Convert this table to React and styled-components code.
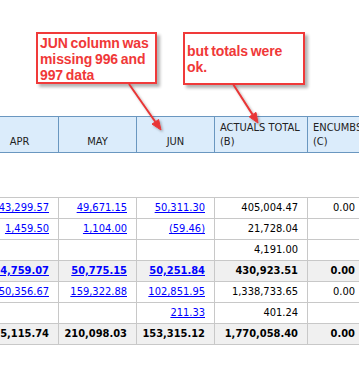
import React from "react";
import styled, { createGlobalStyle } from "styled-components";

const GlobalStyle = createGlobalStyle`
  html, body {
    margin: 0;
    padding: 0;
    background: #ffffff;
    overflow: hidden;
  }
  body {
    font-family: "DejaVu Sans Condensed", "Liberation Sans", sans-serif;
  }
`;

const columns = "78px 78px 78px 93px 57px";

const headers = [
  { label: "APR", align: "center" },
  { label: "MAY", align: "center" },
  { label: "JUN", align: "center" },
  { label: "ACTUALS TOTAL\n(B)", align: "left" },
  { label: "ENCUMBS\n(C)", align: "left" },
];

// l = link, t = total row
const rows = [
  { cells: ["43,299.57", "49,671.15", "50,311.30", "405,004.47", "0.00"], links: [1, 1, 1, 0, 0] },
  { cells: ["1,459.50", "1,104.00", "(59.46)", "21,728.04", ""], links: [1, 1, 1, 0, 0] },
  { cells: ["", "", "", "4,191.00", ""], links: [0, 0, 0, 0, 0] },
  { cells: ["44,759.07", "50,775.15", "50,251.84", "430,923.51", "0.00"], links: [1, 1, 1, 0, 0], total: true },
  { cells: ["50,356.67", "159,322.88", "102,851.95", "1,338,733.65", "0.00"], links: [1, 1, 1, 0, 0] },
  { cells: ["", "", "211.33", "401.24", ""], links: [0, 0, 1, 0, 0] },
  { cells: ["95,115.74", "210,098.03", "153,315.12", "1,770,058.40", "0.00"], links: [0, 0, 0, 0, 0], total: true },
];

export default function App() {
  return (
    <Page>
      <GlobalStyle />
      <Notes>
        <Callout $w={121} $h={52} $pt={1}>
          JUN column was missing 996 and 997 data
        </Callout>
        <Callout $w={122} $h={53} $pt={9}>
          but totals were ok.
        </Callout>
      </Notes>

      <Table>
        <HeaderRow>
          {headers.map((h) => (
            <HeadCell key={h.label} $align={h.align}>
              {h.label}
            </HeadCell>
          ))}
        </HeaderRow>
        <Body>
          {rows.map((r, i) => (
            <Row key={i} $total={r.total}>
              {r.cells.map((c, j) => (
                <Cell key={j}>{r.links[j] && c ? <Link>{c}</Link> : c}</Cell>
              ))}
            </Row>
          ))}
        </Body>
      </Table>

      <Arrows width="359" height="366">
        <defs>
          <filter id="sh" x="-50%" y="-50%" width="200%" height="200%">
            <feDropShadow dx="1.5" dy="1.5" stdDeviation="1" floodColor="#000" floodOpacity="0.3" />
          </filter>
        </defs>
        <g filter="url(#sh)" fill="#e83636" stroke="#e83636">
          <line x1="129" y1="84" x2="155.3" y2="121.8" strokeWidth="2" />
          <polygon points="161,130 152,124.1 158.6,119.5" strokeWidth="1" />
          <line x1="233" y1="84" x2="252.6" y2="114.6" strokeWidth="2" />
          <polygon points="258,123 249.2,116.8 256,112.4" strokeWidth="1" />
        </g>
      </Arrows>
    </Page>
  );
}

const Page = styled.div`
  position: relative;
  width: 359px;
  height: 366px;
  overflow: hidden;
  background: #fff;
`;

const Notes = styled.div`
  display: flex;
  align-items: flex-start;
  gap: 26px;
  height: 116px;
  box-sizing: border-box;
  padding: 32px 0 0 36px;
`;

const Callout = styled.div`
  box-sizing: border-box;
  width: ${(p) => p.$w}px;
  height: ${(p) => p.$h}px;
  border: 2px solid #f03a3a;
  background: #fff;
  box-shadow: 3px 3px 3px rgba(0, 0, 0, 0.3);
  padding: ${(p) => p.$pt}px 4px 0 2px;
  color: #f03838;
  font-family: "Liberation Sans", Arial, sans-serif;
  font-weight: 700;
  font-size: 14px;
  line-height: 16px;
  letter-spacing: -0.1px;
  word-spacing: -1px;
`;

const Table = styled.div`
  margin-left: -19px;
  font-size: 11px;
  color: #000;
`;

const HeaderRow = styled.div`
  display: grid;
  grid-template-columns: ${columns};
  background: #dbecfb;
  border-top: 1px solid #6a97c0;
  border-bottom: 1px solid #6a97c0;
`;

const HeadCell = styled.div`
  height: 35px;
  box-sizing: border-box;
  border-right: 1px solid #6a97c0;
  display: flex;
  align-items: flex-end;
  justify-content: ${(p) => (p.$align === "center" ? "center" : "flex-start")};
  text-align: ${(p) => p.$align};
  padding: 0 5px 3px;
  white-space: pre-line;
  line-height: 14px;
  color: #222;
`;

const Body = styled.div`
  margin-top: 44px;
  border-top: 1px solid #c8c8c8;
`;

const Row = styled.div`
  display: grid;
  grid-template-columns: ${columns};
  border-bottom: 1px solid #c8c8c8;
  background: ${(p) => (p.$total ? "#f0f0f0" : "#fff")};
  font-weight: ${(p) => (p.$total ? 700 : 400)};
`;

const Cell = styled.div`
  height: 20px;
  box-sizing: border-box;
  border-right: 1px solid #c8c8c8;
  padding-right: 9px;
  text-align: right;
  line-height: 20px;
  white-space: nowrap;
`;

const Link = styled.span`
  color: #0000ff;
  text-decoration: underline;
`;

const Arrows = styled.svg`
  position: absolute;
  top: 0;
  left: 0;
  pointer-events: none;
`;
